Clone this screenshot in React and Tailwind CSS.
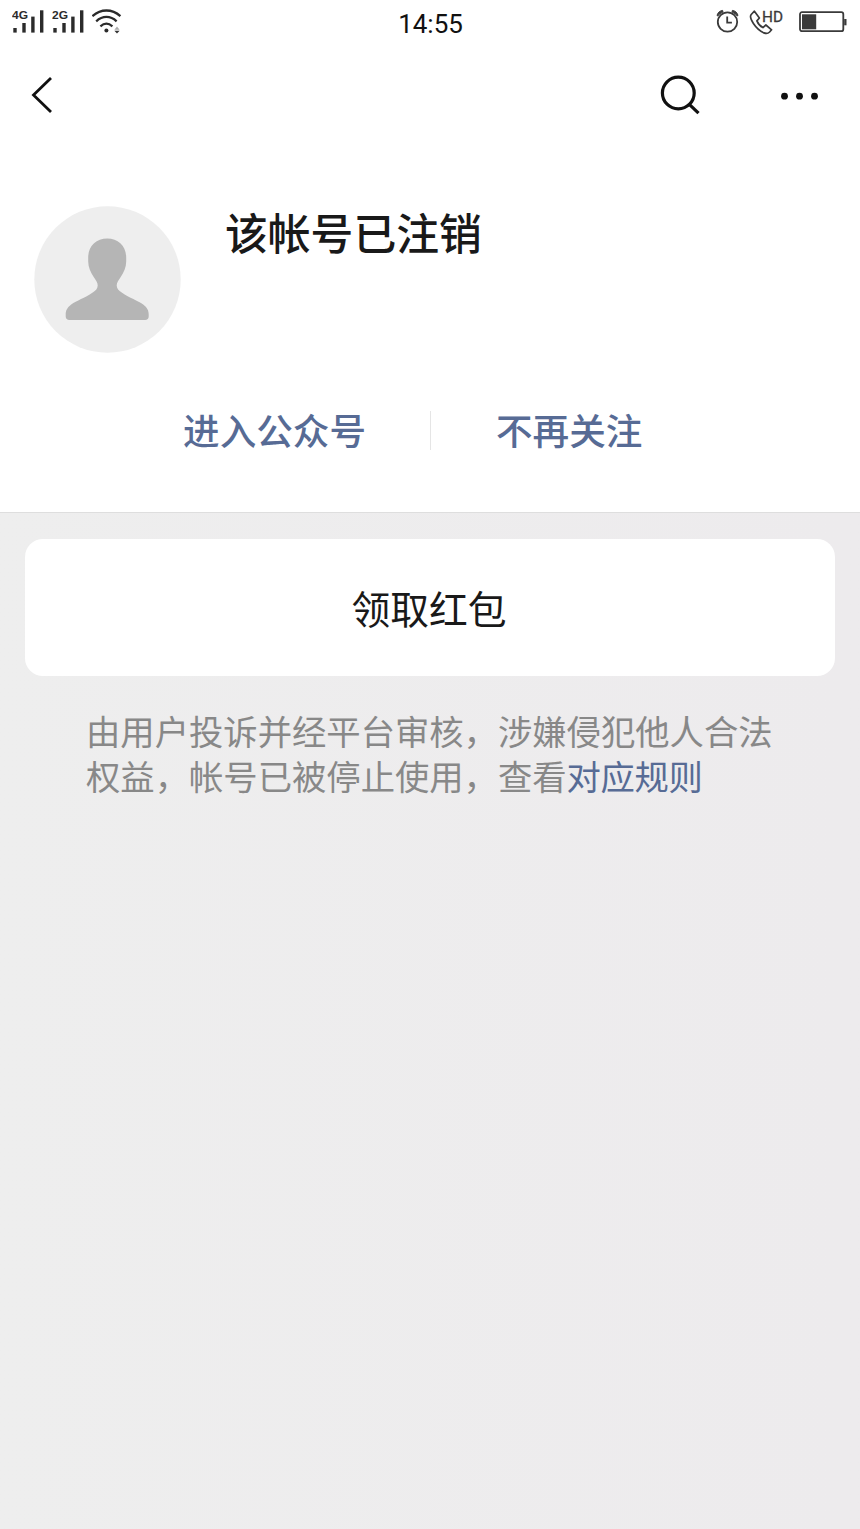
import React from "react";

const actions = ["进入公众号", "不再关注"];

const SignalIcon = ({ label }) => (
  <svg width="40" height="28" viewBox="0 0 40 28" fill="#2b2b2b">
    <text x="0" y="13.2" fontSize="11.5" fontWeight="700" fontFamily="Liberation Sans" textLength="16" lengthAdjust="spacingAndGlyphs">
      {label}
    </text>
    <rect x="1.3" y="22" width="3.4" height="4.6" />
    <rect x="10.3" y="17" width="3.4" height="9.6" />
    <rect x="19.2" y="10.6" width="3.4" height="16" />
    <rect x="28" y="4.3" width="3.4" height="22.3" />
  </svg>
);

const WifiIcon = () => (
  <svg width="32" height="28" viewBox="0 0 32 28" fill="none" stroke="#2b2b2b" strokeWidth="2.3">
    <path d="M.4 10.2C8.9 2.6 19.9 2.6 28.4 10.2" />
    <path d="M4.2 15.3C10.6 9.5 18.3 9.5 24.6 15.3" />
    <path d="M8.4 20.3C12.2 16.9 16.600 16.9 20.4 20.3" />
    <circle cx="14.4" cy="24.6" r="2" fill="#2b2b2b" stroke="none" />
    <path d="M22.400 23.700l2.600-3.200 2.600 3.200z" fill="#aaa" stroke="none" />
    <path d="M22.400 24.700h5.200l-2.600 2.800z" fill="#333" stroke="none" />
  </svg>
);

const AlarmIcon = () => (
  <svg width="24" height="26" viewBox="0 0 24 26" fill="none" stroke="#3a3a3a" strokeWidth="1.8">
    <circle cx="11.5" cy="14" r="9.7" />
    <path d="M11.2 8.5v6.2h4.7" />
    <path d="M1 7.5C1.6 4.7 3.7 2.8 6.6 2.4L7 4C4.6 5 3 6.300 1.8 8z" fill="#3a3a3a" strokeWidth="1" />
    <path d="M22 7.5C21.4 4.7 19.3 2.8 16.4 2.4L16 4c2.4 1 4 2.3 5.2 4z" fill="#3a3a3a" strokeWidth="1" />
  </svg>
);

const CallHdIcon = () => (
  <svg width="36" height="28" viewBox="0 0 36 28" fill="none" stroke="#3a3a3a" strokeWidth="1.7" strokeLinejoin="round">
    <path d="M5.4 3.2L2.2 6.5C1 8 1.6 11.3 4.4 15.5c2.8 4.2 6.6 7.7 10.6 9.4 2.3 1 4.2.5 5.6-.9l2-2.2-5.7-4.8-3 2.6c-2.7-1.3-4.8-3.8-6-6.7L10.4 10z" />
    <text x="13" y="14" fontSize="15.500" fontFamily="Roboto" fill="#3a3a3a" stroke="#3a3a3a" strokeWidth=".3" textLength="21" lengthAdjust="spacingAndGlyphs">
      HD
    </text>
  </svg>
);

const BatteryIcon = () => (
  <svg width="50" height="24" viewBox="0 0 50 24">
    <rect x="1" y="2.2" width="43.3" height="19" rx="2" fill="none" stroke="#3a3a3a" strokeWidth="1.8" />
    <rect x="3" y="4.3" width="14.2" height="15" fill="#3a3a3a" />
    <rect x="45.2" y="9" width="2.3" height="6.3" fill="#3a3a3a" />
  </svg>
);

const StatusBar = () => (
  <div className="grid h-12 grid-cols-3 pr-[11px] pl-3">
    <div className="flex pt-1.5">
      <SignalIcon label="4G" />
      <SignalIcon label="2G" />
      <WifiIcon />
    </div>
    <div className="pt-[5px] text-center font-[Roboto,sans-serif] text-[26px] leading-[39px] text-[#111]">14:55</div>
    <div className="flex items-start justify-end pt-2">
      <div className="mr-[9px]">
        <AlarmIcon />
      </div>
      <div className="mr-[14px]">
        <CallHdIcon />
      </div>
      <div className="pt-[2px]">
        <BatteryIcon />
      </div>
    </div>
  </div>
);

const NavBar = () => (
  <div className="flex h-24 items-center justify-between pr-10 pl-[30px]">
    <svg width="24" height="40" viewBox="0 0 24 40" fill="none" stroke="#111" strokeWidth="2.8">
      <path d="M21 2L3.5 19 21 36" />
    </svg>
    <div className="flex items-center gap-[78px]">
      <svg width="42" height="42" viewBox="0 0 42 42" fill="none" stroke="#111" strokeWidth="3.2">
        <circle cx="18.300" cy="18" r="15.9" />
        <path d="M29.300 29.300l9.200 8.900" />
      </svg>
      <svg width="40" height="12" viewBox="0 0 40 12" fill="#111">
        <circle cx="4.500" cy="6.200" r="3.400" />
        <circle cx="19.500" cy="6.200" r="3.400" />
        <circle cx="34.500" cy="6.200" r="3.400" />
      </svg>
    </div>
  </div>
);

const Avatar = () => (
  <svg width="147" height="147" viewBox="0 0 147 147">
    <circle cx="73.5" cy="73.5" r="73.2" fill="#eee" />
    <path
      fill="#b5b5b5"
      d="M73.200 32.500c11 0 19 7.500 19 19v4c0 6-2.500 11-5.500 15.500-2 3.200-4 5-4 8.500 0 3 2 5 5 7 8 5.500 16 8 21.500 12 4 3 5.500 6 5.500 10v2c0 2-1.500 3.500-3.500 3.500h-76c-2 0-3.500-1.500-3.500-3.500v-2c0-4 1.500-7 5.500-10 5.500-4 13.500-6.500 21.500-12 3-2 5-4 5-7 0-3.500-2-5.300-4-8.500-3-4.500-5.500-9.500-5.500-15.500v-4c0-11.500 8-19 19-19z"
    />
  </svg>
);

const App = () => {
  return (
    <div className="flex min-h-[1529px] w-[860px] flex-col bg-linear-to-r from-[#eeeeee] to-[#edebed] font-['Noto_Sans_CJK_SC',sans-serif]">
      <header className="h-[513px] border-b border-[#dedede] bg-white">
        <StatusBar />
        <NavBar />
        <div className="flex h-[248px] items-start gap-11 pt-[62px] pl-[34px]">
          <Avatar />
          <h1 className="-mt-[3px] text-[42.8px] leading-14 font-medium text-[#191919]">该帐号已注销</h1>
        </div>
        <div className="flex h-[76px] items-center text-[36.6px] leading-[37px] font-medium text-[#576b95]">
          <div className="flex h-[39px] w-[431px] justify-end border-r border-[#e5e5e5] pr-[64px]">{actions[0]}</div>
          <div className="flex h-[39px] pl-[65px]">{actions[1]}</div>
        </div>
      </header>

      <main className="px-[25px] pt-[26px]">
        <div className="flex h-[137px] items-center justify-center rounded-[18px] bg-white pr-[2px] text-[38.8px] text-[#191919]">
          领取红包
        </div>
        <p className="pt-8 pl-[61px] text-[34.35px] leading-[45px] whitespace-nowrap text-[#888]">
          由用户投诉并经平台审核，涉嫌侵犯他人合法
          <br />
          权益，帐号已被停止使用，查看<span className="tracking-[-0.4px] text-[#576b95]">对应规则</span>
        </p>
      </main>
    </div>
  );
};

export default App;
